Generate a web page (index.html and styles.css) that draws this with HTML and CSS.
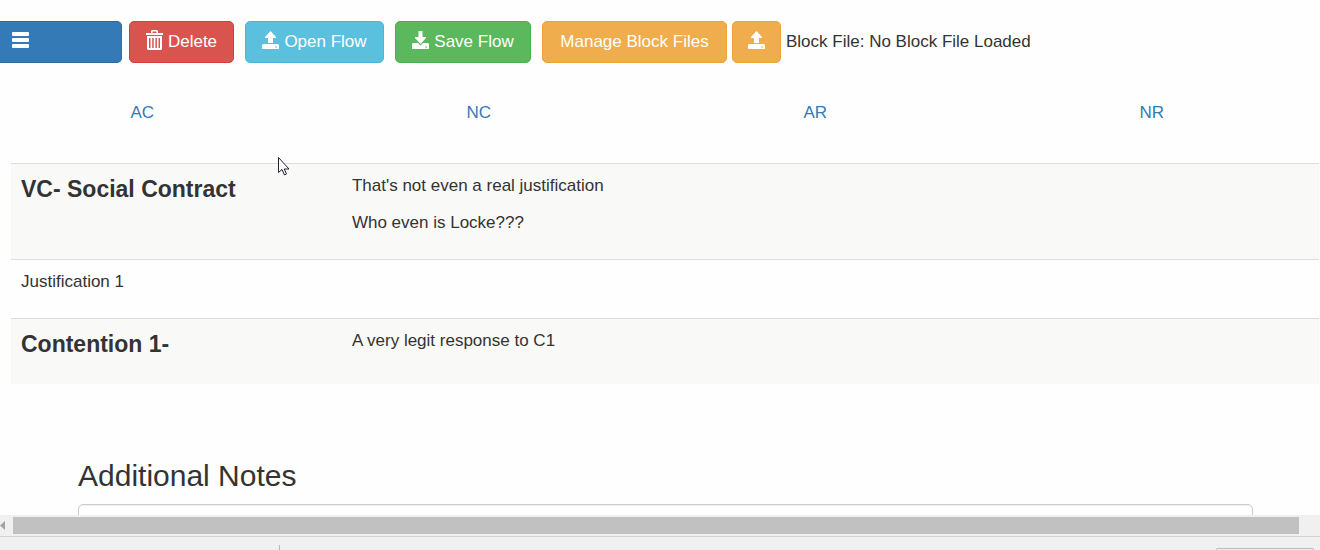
FILE: index.html
```html
<!DOCTYPE html>
<html lang="en">
<head>
<meta charset="utf-8">
<title>Flow</title>
<link rel="stylesheet" href="styles.css">
</head>
<body>
<svg class="defs" aria-hidden="true">
  <symbol id="upload" viewBox="0 0 17 18">
    <path d="M8.500 0 14 6v1H11v5H6V7H3V6z"/>
    <path fill-rule="evenodd" d="M1 13h15l1 1v4H0v-4zM13 15.500v1h2v-1z"/>
  </symbol>
  <symbol id="download" viewBox="0 0 17 18">
    <path d="M6.500 0h4v6H14v1l-5.500 6L3 7V6h3.500z"/>
    <path fill-rule="evenodd" d="M1 12h5l2.500 2.500L11 12h5l1 1v5H0v-5zM13 15.500v1h2v-1z"/>
  </symbol>
</svg>
<main class="page">
  <header class="toolbar">
    <button class="btn menu" type="button" aria-label="Menu"><svg class="icon" viewBox="0 0 17 18"><rect y="1" width="17" height="4" rx="1"/><rect y="7" width="17" height="4" rx="1"/><rect y="13" width="17" height="4" rx="1"/></svg></button>
    <button class="btn delete" type="button"><svg class="icon trash" viewBox="0 0 17 20"><path fill-rule="evenodd" d="M5 3V1l1-1h5l1 1v2h5v2H0V3zM6.500 3h4V1.500h-4zM1 6h15v13l-1 1H2l-1-1zM3 8v10h1.500V8zM6.200 8v10h1.500V8zM9.400 8v10h1.500V8zM12.500 8v10H14V8z"/></svg>Delete</button>
    <button class="btn open" type="button"><svg class="icon"><use href="#upload"/></svg>Open Flow</button>
    <button class="btn save" type="button"><svg class="icon"><use href="#download"/></svg>Save Flow</button>
    <div class="blocks">
      <button class="btn block manage" type="button">Manage Block Files</button>
      <button class="btn block" type="button" aria-label="Load block file"><svg class="icon"><use href="#upload"/></svg></button>
      <span class="loaded">Block File: No Block File Loaded</span>
    </div>
  </header>
  <nav class="tabs"><a href="#ac">AC</a><a href="#nc">NC</a><a href="#ar">AR</a><a href="#nr">NR</a></nav>
  <table class="flow">
    <colgroup><col class="first"><col><col><col></colgroup>
    <tbody>
      <tr><td><h4>VC- Social Contract</h4></td><td><p>That's not even a real justification</p><p>Who even is Locke???</p></td><td></td><td></td></tr>
      <tr><td><p>Justification 1</p></td><td></td><td></td><td></td></tr>
      <tr><td><h4>Contention 1-</h4></td><td><p>A very legit response to C1</p></td><td></td><td></td></tr>
    </tbody>
  </table>
  <section class="notes">
    <label for="notes">Additional Notes</label>
    <textarea id="notes"></textarea>
  </section>
</main>
<div class="scrollbar"><svg class="arrow" viewBox="0 0 5 9"><path d="M5 0v9L0 4.500z"/></svg><div class="thumb"></div></div>
<footer class="status"><div class="divider"></div><div class="chip"></div></footer>
<svg class="cursor" viewBox="0 0 13 20"><path d="M1.500 1.500v15l3.500-3 2.500 5.500 2-1-2.300-5H12z"/></svg>
</body>
</html>
```
FILE: styles.css
```css
* { box-sizing: border-box; }
body {
  margin: 0;
  height: 100vh;
  display: flex;
  flex-direction: column;
  overflow: hidden;
  background: #fefefe;
  color: #333;
  font: 17px/25px "Liberation Sans", Arial, sans-serif;
}
.defs { position: absolute; width: 0; height: 0; }
.page { flex: 1; min-height: 0; overflow: hidden; }
.toolbar { display: flex; gap: 11px; padding-top: 21px; }
.btn {
  display: flex;
  align-items: center;
  justify-content: center;
  gap: 5px;
  height: 42px;
  padding: 0 15px 2px;
  border: 1px solid;
  border-radius: 5px;
  color: #fff;
  font: inherit;
  white-space: nowrap;
}
.icon { width: 17px; height: 18px; margin-bottom: 3px; fill: #fff; flex: none; }
.trash { height: 20px; }
.menu { width: 122px; justify-content: flex-start; padding-left: 12px; margin-right: -4px; border-left: 0; border-radius: 0 5px 5px 0; background: #337ab7; border-color: #2e6da4; }
.delete { min-width: 105px; background: #d9534f; border-color: #d43f3a; }
.open { min-width: 139px; background: #5bc0de; border-color: #46b8da; }
.save { min-width: 136px; background: #5cb85c; border-color: #4cae4c; }
.block { background: #f0ad4e; border-color: #eea236; }
.manage { min-width: 185px; }
.blocks { display: flex; align-items: center; gap: 5px; white-space: nowrap; }
.loaded { padding-bottom: 2px; }
.tabs {
  display: grid;
  grid-template-columns: repeat(4, 1fr);
  margin: 37px 0 0 -26px;
  text-align: center;
}
.tabs a { color: #337ab7; text-decoration: none; }
.flow {
  width: calc(100% - 12px);
  margin: 38px 1px 0 11px;
  border-collapse: collapse;
  table-layout: fixed;
}
.first { width: 25.3%; }
.flow td { padding: 9px 10px 11px; border-top: 1px solid #ddd; vertical-align: top; }
.flow tr:nth-child(odd) { background: #f9f9f8; }
.flow p { margin: 0 0 12px; }
.flow p:last-child { margin-bottom: 13px; }
.flow h4 { margin: 4px 0 16px; font-size: 23px; line-height: 25px; }
.notes { padding: 74px 67px 0 78px; }
.notes label { display: block; margin-bottom: 11px; font-size: 30px; line-height: 35px; }
.notes textarea {
  display: block;
  width: 100%;
  height: 120px;
  border: 1px solid #ccc;
  border-radius: 5px;
  box-shadow: inset 0 1px 1px #0001;
  resize: none;
}
.scrollbar { display: flex; align-items: center; gap: 8px; height: 21px; padding-right: 21px; background: #f0f0f0; }
.arrow { width: 5px; height: 9px; fill: #a9a0a9; }
.thumb { flex: 1; height: 17px; background: #c1c1c1; }
.status {
  display: flex;
  align-items: flex-end;
  justify-content: space-between;
  height: 14px;
  padding: 0 6px 0 279px;
  border-top: 1px solid #d3d3d3;
  background: #f0f0f0;
}
.divider { width: 1px; height: 5px; background: #b8b8b8; }
.chip { width: 98px; height: 2px; border: 1px solid #bbb; border-bottom: 0; border-radius: 3px 3px 0 0; }
.cursor { position: absolute; left: 277px; top: 156px; width: 13px; height: 20px; fill: #fff; stroke: #223; stroke-width: 1; }
```
